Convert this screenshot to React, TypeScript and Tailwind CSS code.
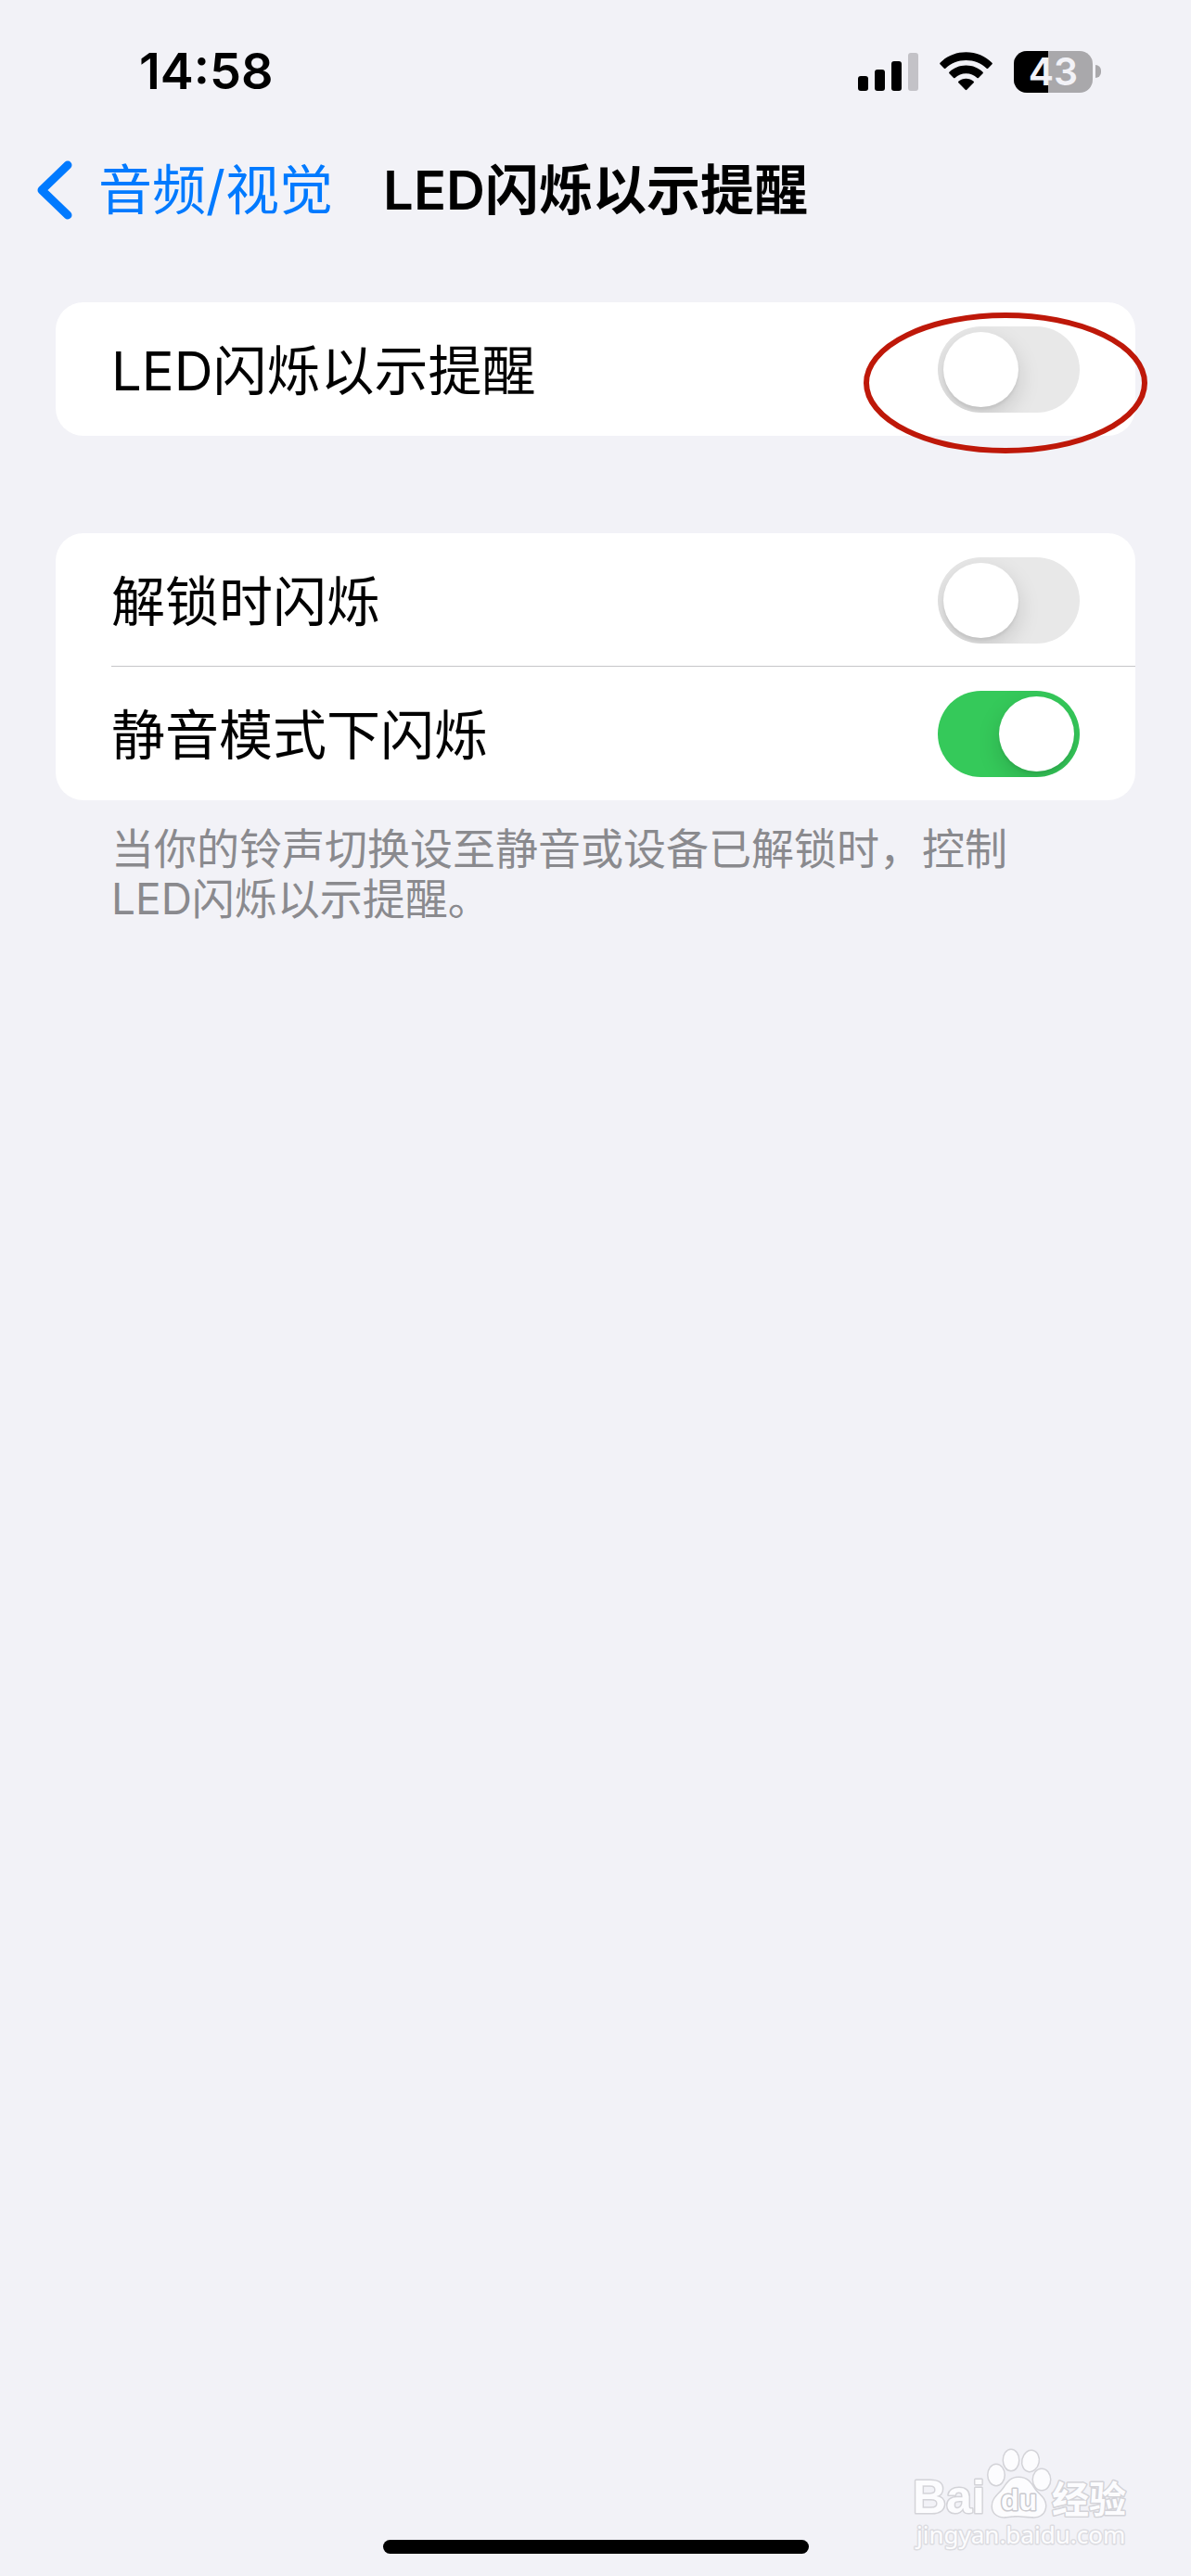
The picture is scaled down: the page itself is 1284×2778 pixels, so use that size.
import { useId, useState } from 'react';
import type { ReactNode } from 'react';

type SettingRowProps = {
    label: string;
    checked: boolean;
    onChange: (value: boolean) => void;
    children?: ReactNode;
};

function SignalIcon() {
    return (
        <svg width="65" height="41" viewBox="0 0 65 41" aria-hidden="true">
            <rect x="0" y="25" width="11" height="16" rx="3" />
            <rect x="18" y="18" width="11" height="23" rx="3" />
            <rect x="36" y="9" width="11" height="32" rx="3" />
            <rect x="54" y="0" width="11" height="41" rx="3" fill="#c3c2c7" />
        </svg>
    );
}

function WifiIcon() {
    return (
        <svg width="57" height="42" viewBox="0 0 58 42" aria-hidden="true">
            <path d="M29 0C17.800 0 7.600 4.400 0.500 11.600Q-0.200 12.400 0.500 13.200L4.900 17.600Q5.700 18.400 6.500 17.600C12.300 12 20.200 8.700 29 8.700S45.700 12 51.500 17.600Q52.300 18.400 53.100 17.600L57.500 13.200Q58.200 12.400 57.500 11.600C50.400 4.400 40.200 0 29 0Z" />
            <path d="M29 14.500C21.800 14.500 15.400 17.300 10.600 21.700Q9.800 22.500 10.600 23.300L15.300 28Q16.100 28.700 16.900 28C20.100 25 24.300 23.300 29 23.300S37.900 25 41.100 28Q41.900 28.700 42.700 28L47.400 23.300Q48.200 22.500 47.400 21.700C42.600 17.300 36.200 14.500 29 14.500Z" />
            <path d="M29 29C25.900 29 23 30.100 20.700 31.900Q19.900 32.600 20.700 33.400L28.200 41.200Q29 42 29.800 41.200L37.300 33.400Q38.100 32.600 37.300 31.900C35 30.100 32.100 29 29 29Z" />
        </svg>
    );
}

function Battery({ level }: { level: number }) {
    return (
        <div className="flex items-center gap-[3px]">
            <div className="relative h-[45px] w-[85px] rounded-[14px] bg-[#a9a8ab]">
                <div className="h-full rounded-l-[14px] bg-black" style={{ width: `${level}%` }} />
                <span className="absolute inset-0 flex items-center justify-center text-[41px] leading-none font-semibold text-[#f2f2f7]">
                    {level}
                </span>
            </div>
            <div className="h-[14px] w-[6px] rounded-r-full bg-[#a9a8ab]" />
        </div>
    );
}

function StatusBar() {
    return (
        <div className="flex h-[154px] items-center justify-between pr-[97px] pl-[150px]">
            <time className="text-[54px] leading-none font-semibold">14:58</time>
            <div className="flex items-center gap-[23px]">
                <SignalIcon />
                <WifiIcon />
                <Battery level={43} />
            </div>
        </div>
    );
}

function NavBar() {
    return (
        <header className="grid h-[102px] grid-cols-[1fr_auto_1fr] items-center px-10 text-[58px] leading-none">
            <button type="button" className="flex items-center gap-[28px] text-[#007aff]">
                <svg width="38" height="64" viewBox="0 0 38 64" fill="none" stroke="currentColor" strokeWidth="9" strokeLinecap="round" strokeLinejoin="round" aria-hidden="true">
                    <path d="M33 5L5 32L33 59" />
                </svg>
                音频/视觉
            </button>
            <h1 className="font-semibold">LED闪烁以示提醒</h1>
        </header>
    );
}

function SettingRow({ label, checked, onChange, children }: SettingRowProps) {
    const id = useId();

    return (
        <div className="relative flex h-[144px] items-center justify-between px-[60px]">
            <label htmlFor={id} className="pt-1 text-[58px] leading-none">
                {label}
            </label>
            <input
                id={id}
                type="checkbox"
                role="switch"
                checked={checked}
                onChange={(e) => onChange(e.target.checked)}
                className="h-[93px] w-[153px] shrink-0 appearance-none overflow-hidden rounded-full bg-[#e8e8e8] p-[6px] transition-colors before:block before:size-[81px] before:rounded-full before:bg-white before:shadow-[0_9px_24px_rgba(0,0,0,0.15),0_3px_3px_rgba(0,0,0,0.06)] checked:bg-[#35c95a] checked:before:ml-[60px]"
            />
            {children}
        </div>
    );
}

// hand-drawn style ring that calls out the main switch
function HighlightRing() {
    return (
        <svg className="pointer-events-none absolute top-[11px] -right-[13px]" width="306" height="152" viewBox="0 0 306 152" fill="none" aria-hidden="true">
            <ellipse cx="153" cy="76" rx="150" ry="73" stroke="#be1809" strokeWidth="6" />
        </svg>
    );
}

function Watermark() {
    return (
        <svg
            className="pointer-events-none absolute right-[64px] bottom-[22px]"
            width="240"
            height="120"
            viewBox="0 0 240 120"
            fill="#fcfcfe"
            stroke="#d3d3d8"
            strokeWidth="3"
            paintOrder="stroke"
            strokeLinejoin="round"
            aria-hidden="true"
        >
            <text x="4" y="74" fontSize="50" fontWeight="700" fontFamily="Liberation Sans, sans-serif">Bai</text>
            <ellipse cx="94" cy="33" rx="8.500" ry="11" />
            <ellipse cx="110" cy="17" rx="8" ry="11" />
            <ellipse cx="131" cy="18" rx="8.500" ry="11" transform="rotate(12 131 18)" />
            <ellipse cx="143" cy="38" rx="9" ry="11" />
            <path d="M118 36C108 36 105 44 101 49C96 55 90 58 90 67C90 75 97 79 105 78C111 77 114 77 118 77S126 78 132 78C140 79 147 75 147 66C147 58 139 54 135 48C131 42 128 36 118 36Z" />
            <text x="99" y="71" fontSize="32" fontWeight="700" fontFamily="Liberation Sans, sans-serif" stroke="#c9c9ce">du</text>
            <text x="154" y="74" fontSize="40" fontWeight="700" fontFamily="Noto Sans CJK SC, sans-serif">经验</text>
            <text x="8" y="107" fontSize="26" fontFamily="Noto Sans, sans-serif" stroke="#dcdce1">jingyan.baidu.com</text>
        </svg>
    );
}

export default function App() {
    const [ledFlash, setLedFlash] = useState(false);
    const [flashUnlocked, setFlashUnlocked] = useState(false);
    const [flashSilent, setFlashSilent] = useState(true);

    return (
        <div lang="zh-CN" className="relative flex min-h-screen flex-col bg-[#f2f2f7] font-['Inter','Noto_Sans_CJK_SC',sans-serif] text-black">
            <StatusBar />
            <NavBar />

            <main className="flex-1 px-[60px] pt-[70px]">
                <section className="rounded-[30px] bg-white">
                    <SettingRow label="LED闪烁以示提醒" checked={ledFlash} onChange={setLedFlash}>
                        <HighlightRing />
                    </SettingRow>
                </section>

                <section className="mt-[105px] rounded-[30px] bg-white">
                    <SettingRow label="解锁时闪烁" checked={flashUnlocked} onChange={setFlashUnlocked}>
                        <div className="absolute right-0 bottom-0 left-[60px] h-px bg-[#c6c6c8]" />
                    </SettingRow>
                    <SettingRow label="静音模式下闪烁" checked={flashSilent} onChange={setFlashSilent} />
                </section>

                <p className="mt-[25px] px-[60px] text-[46px] leading-[54px] text-[#8a8a8e]">
                    当你的铃声切换设至静音或设备已解锁时，控制 LED闪烁以示提醒。
                </p>
            </main>

            <Watermark />
            <div className="mx-auto mb-6 h-[15px] w-[459px] rounded-full bg-black" />
        </div>
    );
}
